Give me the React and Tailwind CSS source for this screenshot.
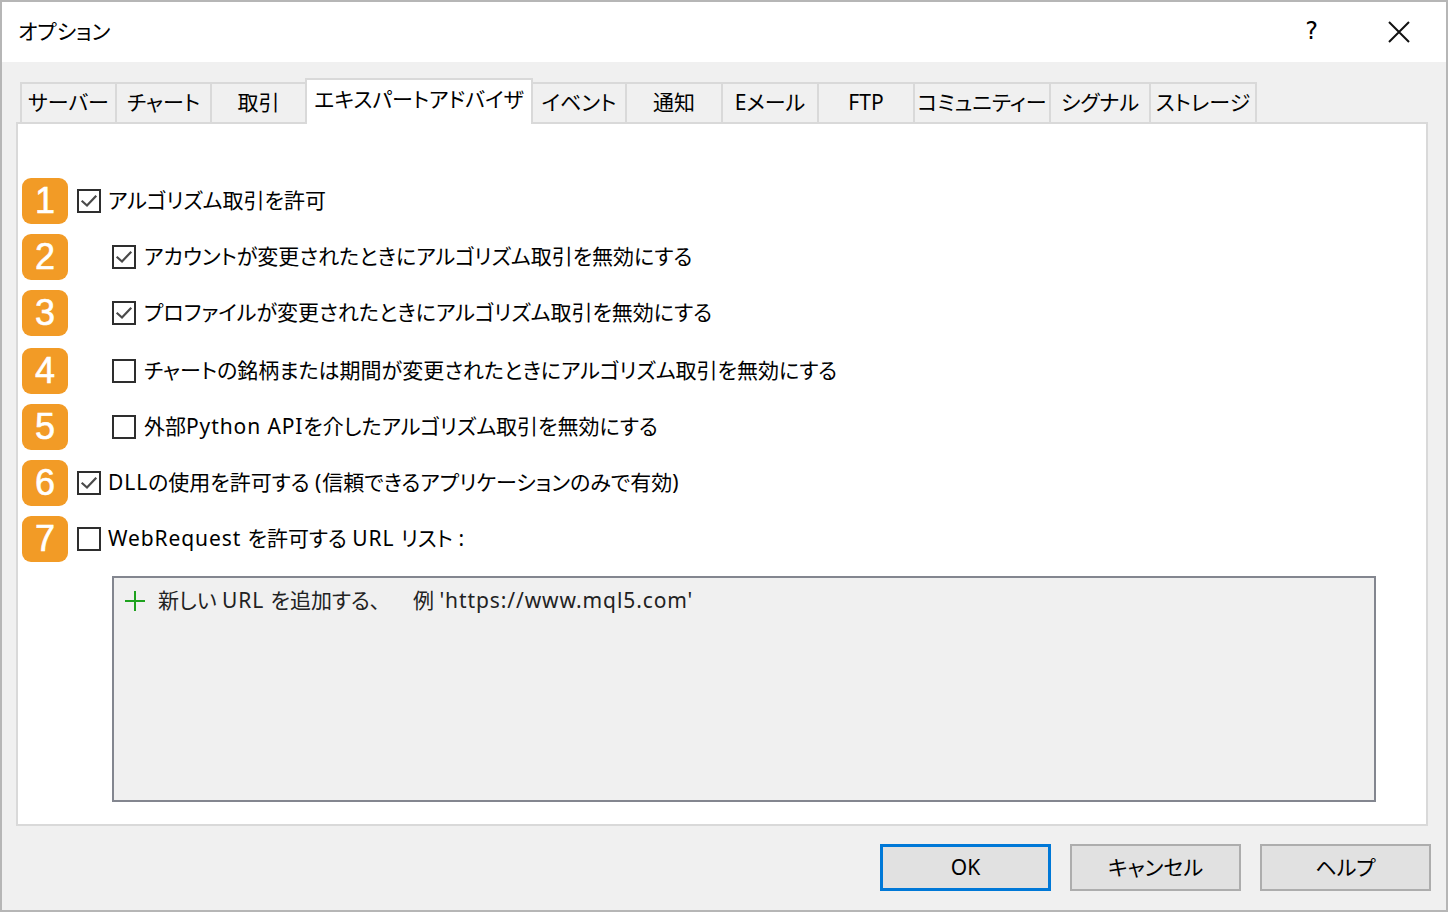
import React from "react";

const FONT = "[font-family:'Noto_Sans','Noto_Sans_CJK_JP',sans-serif] [font-feature-settings:'palt']";

const tabs = [
  { label: "サーバー", w: "w-[95px]" },
  { label: "チャート", w: "w-[95px]" },
  { label: "取引", w: "w-[95px]" },
  { label: "エキスパートアドバイザ", w: "w-[228px]", active: true },
  { label: "イベント", w: "w-[92px]" },
  { label: "通知", w: "w-[96px]" },
  { label: "Eメール", w: "w-[96px]" },
  { label: "FTP", w: "w-[96px]" },
  { label: "コミュニティー", w: "w-[136px]" },
  { label: "シグナル", w: "w-[100px]" },
  { label: "ストレージ", w: "w-[108px]", last: true },
];

function L({ children }) {
  return <span className="tracking-[0.9px]">{children}</span>;
}

function Check({ checked }) {
  return (
    <div className="w-[24px] h-[24px] border-2 border-[#2e2e2e] bg-white flex items-center justify-center shrink-0">
      {checked && (
        <svg width="20" height="20" viewBox="0 0 20 20" fill="none">
          <path d="M3.5 10.5 L8 14.5 L16.5 5.5" stroke="#4a4a4a" strokeWidth="2.2" strokeLinecap="square" strokeLinejoin="miter" />
        </svg>
      )}
    </div>
  );
}

function Badge({ n }) {
  return (
    <div className="w-[46px] h-[46px] rounded-[9px] bg-[#f29b26] flex items-center justify-center shrink-0 text-white text-[36px] leading-none [font-family:'Liberation_Sans',Arial,sans-serif] [-webkit-text-stroke:0.6px_white]">
      {n}
    </div>
  );
}

function Row({ n, checked, level, children, extra }) {
  return (
    <div className={`flex items-center h-[46px] ${extra || ""}`}>
      <Badge n={n} />
      <div className={level === 2 ? "ml-[44px]" : "ml-[9px]"}>
        <Check checked={checked} />
      </div>
      <span className={`${level === 2 ? "ml-[8px]" : "ml-[7px]"} pb-[1px] text-[21px] leading-none text-black whitespace-pre`}>{children}</span>
    </div>
  );
}

export default function App() {
  return (
    <div className={`w-[1448px] h-[912px] border-2 border-[#b6b6b6] bg-[#f0f0f0] flex flex-col ${FONT}`}>
      {/* Title bar */}
      <div className="h-[60px] bg-white flex items-center pl-[16px] shrink-0">
        <span className="text-[21px] leading-none pb-[1px] text-black">オプション</span>
        <div className="flex-1" />
        <span className="text-[24px] leading-none pb-[2px] text-black mr-[70px] [font-family:'DejaVu_Sans',sans-serif]">?</span>
        <svg width="22" height="22" viewBox="0 0 22 22" className="mr-[36px]">
          <path d="M1 1 L21 21 M21 1 L1 21" stroke="#111" strokeWidth="2" />
        </svg>
      </div>

      {/* Body */}
      <div className="flex-1 flex flex-col pl-[14px] pr-[15px] pt-[16px]">
        {/* Tabs */}
        <div className="flex items-end h-[44px] pl-[4px] relative z-10">
          {tabs.map((t, i) => {
            const prevActive = i > 0 && tabs[i - 1].active;
            if (t.active) {
              return (
                <div
                  key={i}
                  className={`${t.w} h-[46px] -mb-[2px] bg-white border-2 border-b-0 border-[#d9d9d9] flex items-center justify-center pb-[6px] text-[21px] leading-none text-black whitespace-nowrap`}
                >
                  {t.label}
                </div>
              );
            }
            return (
              <div
                key={i}
                className={`${t.w} h-[40px] bg-[#f0f0f0] border-t-2 ${prevActive ? "" : "border-l-2"} ${t.last ? "border-r-2" : ""} border-[#d9d9d9] flex items-center justify-center pb-[1px] text-[21px] leading-none text-black whitespace-nowrap`}
              >
                {t.label}
              </div>
            );
          })}
        </div>

        {/* Panel */}
        <div className="w-[1412px] h-[704px] border-2 border-[#d9d9d9] bg-white pl-[4px] pt-[54px] flex flex-col gap-[10px]">
          <Row n="1" checked level={1}>アルゴリズム取引を許可</Row>
          <Row n="2" checked level={2}>アカウントが変更されたときにアルゴリズム取引を無効にする</Row>
          <Row n="3" checked level={2}>プロファイルが変更されたときにアルゴリズム取引を無効にする</Row>
          <Row n="4" level={2} extra="mt-[2px]">チャートの銘柄または期間が変更されたときにアルゴリズム取引を無効にする</Row>
          <Row n="5" level={2}>外部<L>Python API</L>を介したアルゴリズム取引を無効にする</Row>
          <Row n="6" checked level={1}><L>DLL</L>の使用を許可する <L>(</L>信頼できるアプリケーションのみで有効<L>)</L></Row>
          <Row n="7" level={1}><L>WebRequest </L>を許可する <L>URL </L>リスト <L>:</L></Row>
          <div className="ml-[90px] mt-[4px] w-[1264px] h-[226px] border-2 border-[#83868f] bg-[#f0f0f0] pl-[10px] pt-[10px]">
            <div className="flex items-center h-[26px]">
              <svg width="22" height="22" viewBox="0 0 22 22">
                <path d="M11 1 V21 M1 11 H21" stroke="#1ea21e" strokeWidth="2" />
              </svg>
              <span className="ml-[12px] pb-[1px] text-[21px] leading-none text-[#222] whitespace-pre">
                新しい <L>URL </L>を追加する、{"      "}例 <L>'https://www.mql5.com'</L>
              </span>
            </div>
          </div>
        </div>

        {/* Buttons */}
        <div className="flex justify-end gap-[19px] mt-[18px]">
          <div className="w-[171px] h-[47px] border-[3px] border-[#0078d7] bg-[#e1e1e1] flex items-center justify-center pb-[1px] text-[21px] leading-none text-black">
            OK
          </div>
          <div className="w-[171px] h-[47px] border-2 border-[#adadad] bg-[#e1e1e1] flex items-center justify-center pb-[1px] text-[21px] leading-none text-black">
            キャンセル
          </div>
          <div className="w-[171px] h-[47px] border-2 border-[#adadad] bg-[#e1e1e1] flex items-center justify-center pb-[1px] text-[21px] leading-none text-black">
            ヘルプ
          </div>
        </div>
      </div>
    </div>
  );
}
